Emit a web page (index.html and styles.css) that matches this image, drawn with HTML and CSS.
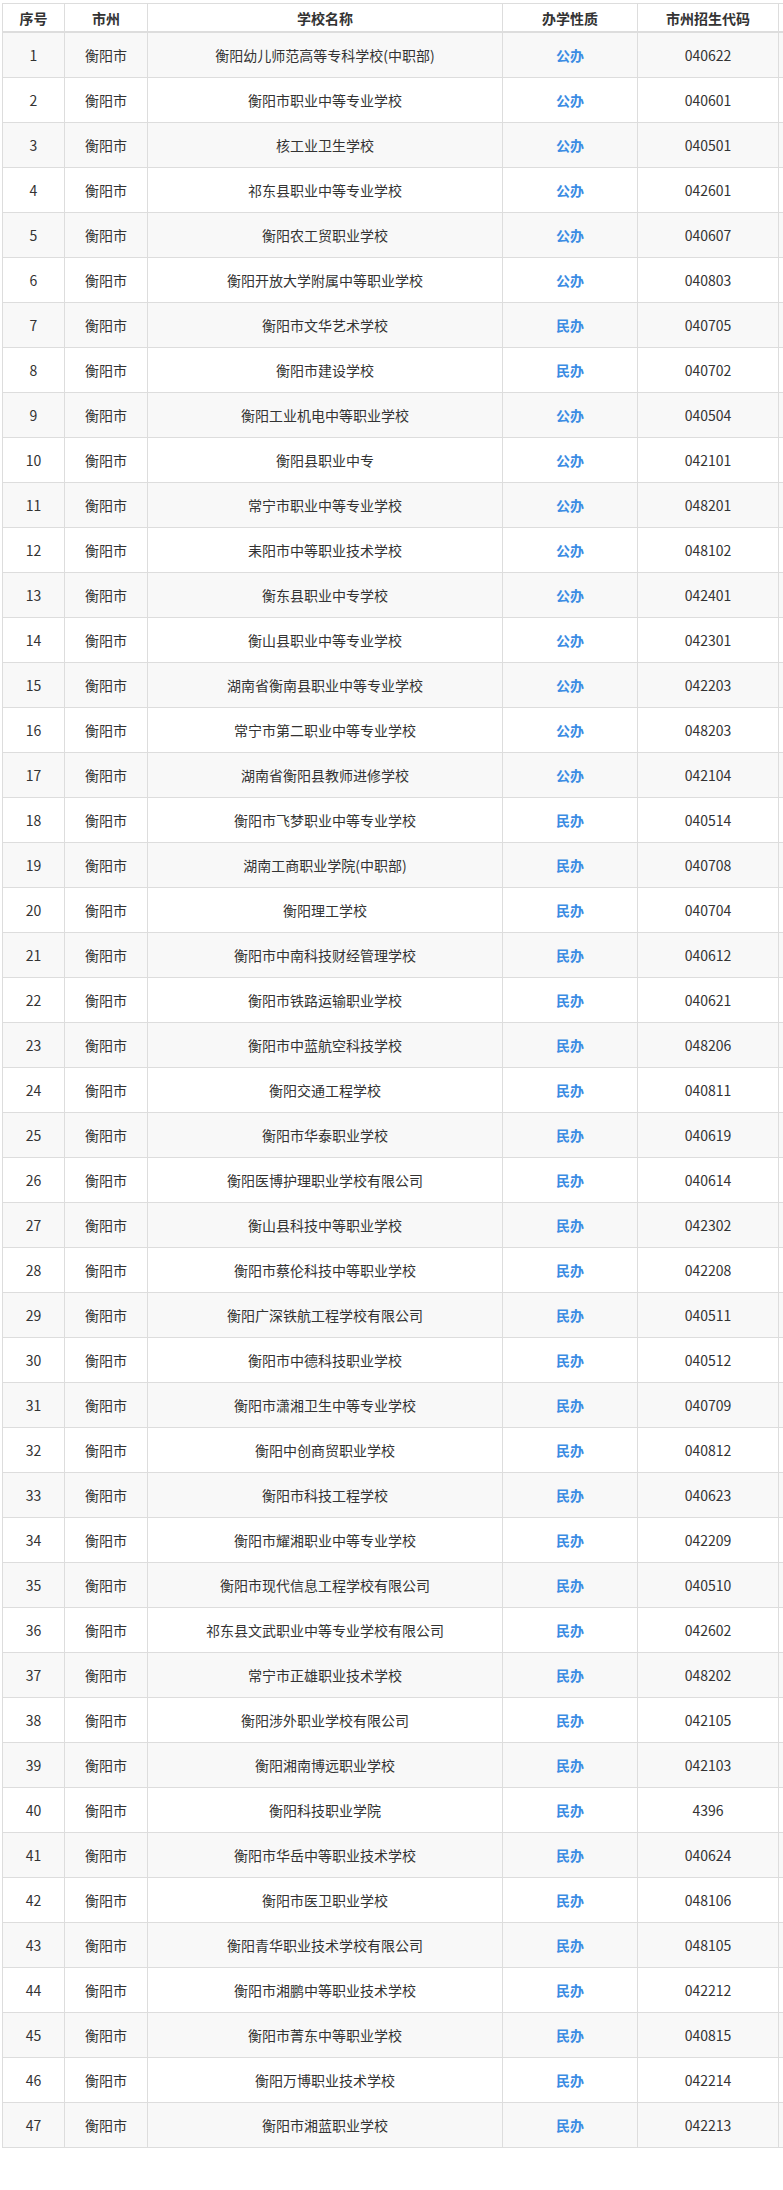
FILE: index.html
```html
<!DOCTYPE html>
<html lang="zh-CN">
<head>
<meta charset="utf-8">
<title>衡阳市中职学校</title>
<link rel="stylesheet" href="styles.css">
</head>
<body>
<div class="wrap">
<table class="tbl">
<colgroup><col class="c1"><col class="c2"><col class="c3"><col class="c4"><col class="c5"><col class="c6"></colgroup>
<thead><tr><th>序号</th><th>市州</th><th>学校名称</th><th>办学性质</th><th>市州招生代码</th><th></th></tr></thead>
<tbody>
<tr><td>1</td><td>衡阳市</td><td>衡阳幼儿师范高等专科学校(中职部)</td><td class="t">公办</td><td>040622</td><td></td></tr>
<tr><td>2</td><td>衡阳市</td><td>衡阳市职业中等专业学校</td><td class="t">公办</td><td>040601</td><td></td></tr>
<tr><td>3</td><td>衡阳市</td><td>核工业卫生学校</td><td class="t">公办</td><td>040501</td><td></td></tr>
<tr><td>4</td><td>衡阳市</td><td>祁东县职业中等专业学校</td><td class="t">公办</td><td>042601</td><td></td></tr>
<tr><td>5</td><td>衡阳市</td><td>衡阳农工贸职业学校</td><td class="t">公办</td><td>040607</td><td></td></tr>
<tr><td>6</td><td>衡阳市</td><td>衡阳开放大学附属中等职业学校</td><td class="t">公办</td><td>040803</td><td></td></tr>
<tr><td>7</td><td>衡阳市</td><td>衡阳市文华艺术学校</td><td class="t">民办</td><td>040705</td><td></td></tr>
<tr><td>8</td><td>衡阳市</td><td>衡阳市建设学校</td><td class="t">民办</td><td>040702</td><td></td></tr>
<tr><td>9</td><td>衡阳市</td><td>衡阳工业机电中等职业学校</td><td class="t">公办</td><td>040504</td><td></td></tr>
<tr><td>10</td><td>衡阳市</td><td>衡阳县职业中专</td><td class="t">公办</td><td>042101</td><td></td></tr>
<tr><td>11</td><td>衡阳市</td><td>常宁市职业中等专业学校</td><td class="t">公办</td><td>048201</td><td></td></tr>
<tr><td>12</td><td>衡阳市</td><td>耒阳市中等职业技术学校</td><td class="t">公办</td><td>048102</td><td></td></tr>
<tr><td>13</td><td>衡阳市</td><td>衡东县职业中专学校</td><td class="t">公办</td><td>042401</td><td></td></tr>
<tr><td>14</td><td>衡阳市</td><td>衡山县职业中等专业学校</td><td class="t">公办</td><td>042301</td><td></td></tr>
<tr><td>15</td><td>衡阳市</td><td>湖南省衡南县职业中等专业学校</td><td class="t">公办</td><td>042203</td><td></td></tr>
<tr><td>16</td><td>衡阳市</td><td>常宁市第二职业中等专业学校</td><td class="t">公办</td><td>048203</td><td></td></tr>
<tr><td>17</td><td>衡阳市</td><td>湖南省衡阳县教师进修学校</td><td class="t">公办</td><td>042104</td><td></td></tr>
<tr><td>18</td><td>衡阳市</td><td>衡阳市飞梦职业中等专业学校</td><td class="t">民办</td><td>040514</td><td></td></tr>
<tr><td>19</td><td>衡阳市</td><td>湖南工商职业学院(中职部)</td><td class="t">民办</td><td>040708</td><td></td></tr>
<tr><td>20</td><td>衡阳市</td><td>衡阳理工学校</td><td class="t">民办</td><td>040704</td><td></td></tr>
<tr><td>21</td><td>衡阳市</td><td>衡阳市中南科技财经管理学校</td><td class="t">民办</td><td>040612</td><td></td></tr>
<tr><td>22</td><td>衡阳市</td><td>衡阳市铁路运输职业学校</td><td class="t">民办</td><td>040621</td><td></td></tr>
<tr><td>23</td><td>衡阳市</td><td>衡阳市中蓝航空科技学校</td><td class="t">民办</td><td>048206</td><td></td></tr>
<tr><td>24</td><td>衡阳市</td><td>衡阳交通工程学校</td><td class="t">民办</td><td>040811</td><td></td></tr>
<tr><td>25</td><td>衡阳市</td><td>衡阳市华泰职业学校</td><td class="t">民办</td><td>040619</td><td></td></tr>
<tr><td>26</td><td>衡阳市</td><td>衡阳医博护理职业学校有限公司</td><td class="t">民办</td><td>040614</td><td></td></tr>
<tr><td>27</td><td>衡阳市</td><td>衡山县科技中等职业学校</td><td class="t">民办</td><td>042302</td><td></td></tr>
<tr><td>28</td><td>衡阳市</td><td>衡阳市蔡伦科技中等职业学校</td><td class="t">民办</td><td>042208</td><td></td></tr>
<tr><td>29</td><td>衡阳市</td><td>衡阳广深铁航工程学校有限公司</td><td class="t">民办</td><td>040511</td><td></td></tr>
<tr><td>30</td><td>衡阳市</td><td>衡阳市中德科技职业学校</td><td class="t">民办</td><td>040512</td><td></td></tr>
<tr><td>31</td><td>衡阳市</td><td>衡阳市潇湘卫生中等专业学校</td><td class="t">民办</td><td>040709</td><td></td></tr>
<tr><td>32</td><td>衡阳市</td><td>衡阳中创商贸职业学校</td><td class="t">民办</td><td>040812</td><td></td></tr>
<tr><td>33</td><td>衡阳市</td><td>衡阳市科技工程学校</td><td class="t">民办</td><td>040623</td><td></td></tr>
<tr><td>34</td><td>衡阳市</td><td>衡阳市耀湘职业中等专业学校</td><td class="t">民办</td><td>042209</td><td></td></tr>
<tr><td>35</td><td>衡阳市</td><td>衡阳市现代信息工程学校有限公司</td><td class="t">民办</td><td>040510</td><td></td></tr>
<tr><td>36</td><td>衡阳市</td><td>祁东县文武职业中等专业学校有限公司</td><td class="t">民办</td><td>042602</td><td></td></tr>
<tr><td>37</td><td>衡阳市</td><td>常宁市正雄职业技术学校</td><td class="t">民办</td><td>048202</td><td></td></tr>
<tr><td>38</td><td>衡阳市</td><td>衡阳涉外职业学校有限公司</td><td class="t">民办</td><td>042105</td><td></td></tr>
<tr><td>39</td><td>衡阳市</td><td>衡阳湘南博远职业学校</td><td class="t">民办</td><td>042103</td><td></td></tr>
<tr><td>40</td><td>衡阳市</td><td>衡阳科技职业学院</td><td class="t">民办</td><td>4396</td><td></td></tr>
<tr><td>41</td><td>衡阳市</td><td>衡阳市华岳中等职业技术学校</td><td class="t">民办</td><td>040624</td><td></td></tr>
<tr><td>42</td><td>衡阳市</td><td>衡阳市医卫职业学校</td><td class="t">民办</td><td>048106</td><td></td></tr>
<tr><td>43</td><td>衡阳市</td><td>衡阳青华职业技术学校有限公司</td><td class="t">民办</td><td>048105</td><td></td></tr>
<tr><td>44</td><td>衡阳市</td><td>衡阳市湘鹏中等职业技术学校</td><td class="t">民办</td><td>042212</td><td></td></tr>
<tr><td>45</td><td>衡阳市</td><td>衡阳市菁东中等职业学校</td><td class="t">民办</td><td>040815</td><td></td></tr>
<tr><td>46</td><td>衡阳市</td><td>衡阳万博职业技术学校</td><td class="t">民办</td><td>042214</td><td></td></tr>
<tr><td>47</td><td>衡阳市</td><td>衡阳市湘蓝职业学校</td><td class="t">民办</td><td>042213</td><td></td></tr>
</tbody>
</table>
</div>
</body>
</html>
```

FILE: styles.css
```css
html, body {
  margin: 0;
  padding: 0;
  background: #fff;
}
body {
  font-family: "Noto Sans CJK SC", "Noto Sans", "Liberation Sans", sans-serif;
  font-size: 14px;
  color: #333;
}
.wrap {
  padding: 3px 0 0 2px;
  overflow: hidden;
  width: 781px;
}
.tbl {
  border-collapse: collapse;
  table-layout: fixed;
  width: 900px;
}
.c1 { width: 62px; }
.c2 { width: 83px; }
.c3 { width: 355px; }
.c4 { width: 135px; }
.c5 { width: 141px; }
.c6 { width: 124px; }
.tbl th, .tbl td {
  border: 1px solid #dddddd;
  text-align: center;
  padding: 0;
  white-space: nowrap;
  overflow: hidden;
}
.tbl th {
  height: 27px;
  font-weight: 700;
  line-height: 20px;
  border-bottom: 2px solid #dddddd;
}
.tbl td {
  height: 44px;
  line-height: 20px;
}
.tbl tbody tr:nth-child(odd) {
  background: #f8f8f8;
}
.tbl td.t {
  color: #3b8ce3;
  font-weight: 700;
}
```
